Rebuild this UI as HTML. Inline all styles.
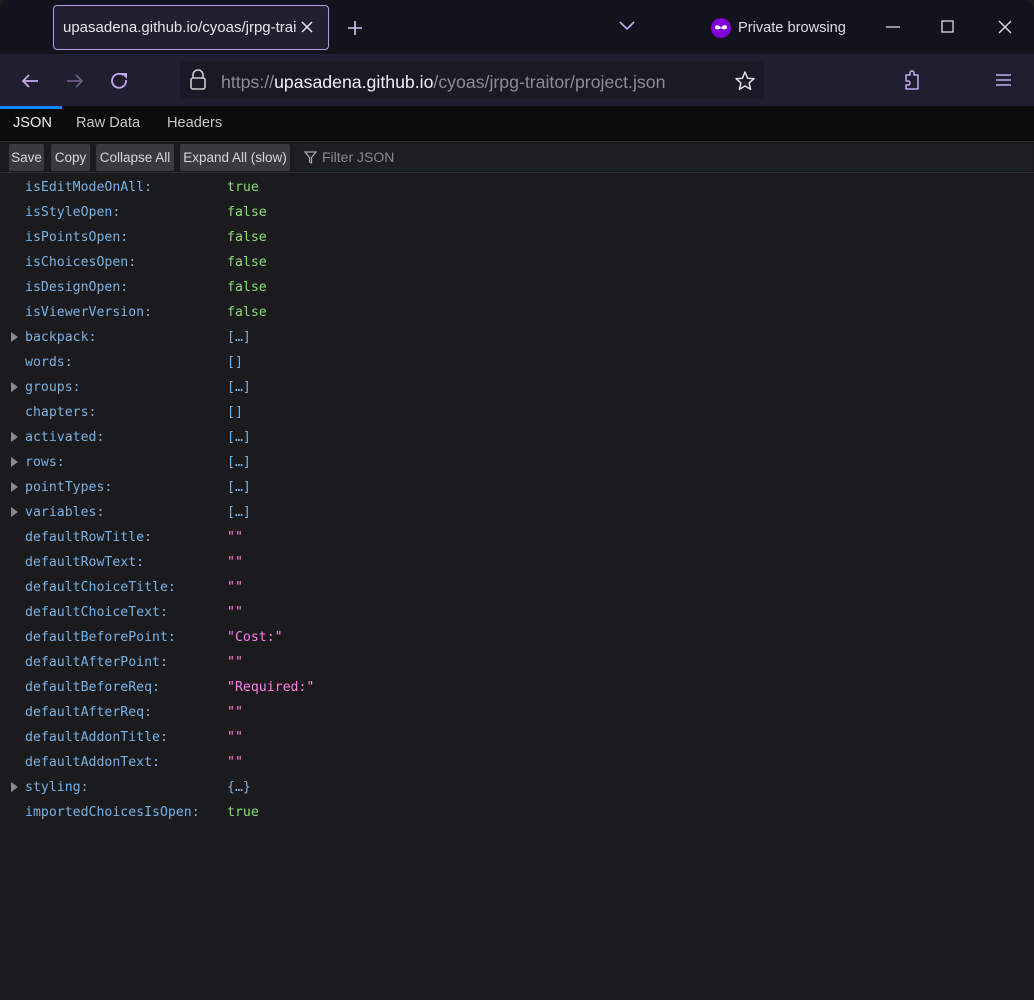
<!DOCTYPE html>
<html><head><meta charset="utf-8"><style>
*{margin:0;padding:0;box-sizing:border-box}
body{width:1034px;height:1000px;background:#1b1b1e;font-family:"Liberation Sans",sans-serif;position:relative;overflow:hidden}
.abs{position:absolute}
.tabbar{left:0;top:0;width:1034px;height:54px;background:#13131d;border-radius:10px 10px 0 0}
.tab{left:53px;top:5px;width:276px;height:45px;border:1px solid #b99ae4;border-radius:4px;background:#20202e;color:#e6e6ee;font-size:15px;line-height:43px;padding-left:9px;white-space:nowrap;overflow:hidden}
.nav{left:0;top:54px;width:1034px;height:52px;background:#201f30}
.url{left:180px;top:61px;width:584px;height:38px;background:#1a1a27;border-radius:5px}
.ctabs{left:0;top:106px;width:1034px;height:35px;background:#0c0c0d}
.tb{left:0;top:141px;width:1034px;height:32px;background:#1b1b1e;border-top:1px solid #2e2e31;border-bottom:1px solid #2e2e31}
.btn{top:144px;height:27px;background:#3a3a3e;border-radius:2px;color:#d7d7db;font-size:13.5px;line-height:27px;text-align:center;white-space:nowrap}
.filter{left:293px;top:144px;width:740px;height:27px;background:#1c2022;color:#8a8a90;font-size:14px;line-height:27px;padding-left:29px}
.row{position:absolute;left:25px;font-family:"DejaVu Sans Mono","Liberation Mono",monospace;font-size:13.2px;height:25px;line-height:25px;color:#75b2e8;white-space:pre;margin-top:1px}
.v{position:absolute;left:202px}
.t{color:#86de74}.s{color:#ff7de9}.b{color:#75b2e8}
.arr{position:absolute;left:-14px;top:7px;width:0;height:0;border-left:7px solid #8a8a8e;border-top:5px solid transparent;border-bottom:5px solid transparent}
</style></head><body>
<div class="abs tabbar"></div>
<div class="abs tab">upasadena.github.io/cyoas/jrpg-trai</div>
<svg class="abs" style="left:300px;top:20px" width="14" height="14"><path d="M2 2L12 12M12 2L2 12" stroke="#e6e6ee" stroke-width="1.5"/></svg>
<svg class="abs" style="left:346px;top:19px" width="18" height="18"><path d="M9 2V16M2 9H16" stroke="#d9c3f7" stroke-width="1.6"/></svg>
<svg class="abs" style="left:618px;top:20px" width="18" height="12"><path d="M2 2L9 9L16 2" stroke="#c8a9f0" stroke-width="1.6" fill="none"/></svg>
<svg class="abs" style="left:711px;top:18px" width="20" height="20"><circle cx="10" cy="10" r="10" fill="#8000d7"/><path d="M4 9c0-3 5-2 6 1c1-3 6-4 6-1c0 3-4 3-6 1c-2 2-6 2-6-1z" fill="#fff"/></svg>
<div class="abs" style="left:738px;top:18px;color:#dcdce6;font-size:14.6px;line-height:20px">Private browsing</div>
<svg class="abs" style="left:884px;top:20px" width="18" height="14"><path d="M2 7H16" stroke="#ddd" stroke-width="1.3"/></svg>
<svg class="abs" style="left:941px;top:20px" width="14" height="14"><rect x="1" y="1" width="11" height="11" stroke="#ddd" stroke-width="1.3" fill="none"/></svg>
<svg class="abs" style="left:997px;top:19px" width="16" height="16"><path d="M2 2L14 14M14 2L2 14" stroke="#ddd" stroke-width="1.4"/></svg>
<div class="abs nav"></div>
<svg class="abs" style="left:20px;top:71px" width="20" height="20"><path d="M18 10H3M9 4L3 10L9 16" stroke="#c8a9f0" stroke-width="1.7" fill="none"/></svg>
<svg class="abs" style="left:65px;top:71px" width="20" height="20"><path d="M2 10H17M11 4L17 10L11 16" stroke="#6d5a86" stroke-width="1.7" fill="none"/></svg>
<svg class="abs" style="left:110px;top:71px" width="20" height="20"><path d="M16 9A7 7 0 1 1 13 4" stroke="#c8a9f0" stroke-width="1.8" fill="none"/><path d="M11 2H17V8Z" fill="#c8a9f0"/></svg>
<div class="abs url"></div>
<svg class="abs" style="left:188px;top:69px" width="20" height="22"><path d="M5 9V6a5 5 0 0 1 10 0V9" stroke="#ccc" stroke-width="1.6" fill="none"/><rect x="3" y="9" width="14" height="11" rx="2" stroke="#ccc" stroke-width="1.6" fill="none"/></svg>
<div class="abs" style="left:221px;top:71px;font-size:17.7px;line-height:22px;color:#8d8b98;white-space:nowrap">https://<span style="color:#f0f0f4">upasadena.github.io</span>/cyoas/jrpg-traitor/project.json</div>
<svg class="abs" style="left:734px;top:70px" width="22" height="22"><path d="M11 2L13.6 8.2L20 8.7L15.1 12.9L16.6 19.3L11 15.9L5.4 19.3L6.9 12.9L2 8.7L8.4 8.2Z" stroke="#e0e0ea" stroke-width="1.5" fill="none" stroke-linejoin="round"/></svg>
<svg class="abs" style="left:904px;top:70px" width="20" height="22"><path d="M2 9V5H6V3a2 2 0 0 1 4 0V5H14V19H2V15H4a2 2 0 0 0 0-4H2Z" stroke="#c8a9f0" stroke-width="1.5" fill="none" stroke-linejoin="round"/></svg>
<svg class="abs" style="left:995px;top:72px" width="18" height="16"><path d="M1 3H16M1 8H16M1 13H16" stroke="#c8a9f0" stroke-width="1.6"/></svg>
<div class="abs ctabs"></div>
<div class="abs" style="left:0;top:106px;width:62px;height:3px;background:#0a84ff"></div>
<div class="abs" style="left:13px;top:115px;color:#f0f0f4;font-size:14.6px">JSON</div>
<div class="abs" style="left:76px;top:115px;color:#c8c8cc;font-size:14.6px">Raw Data</div>
<div class="abs" style="left:167px;top:115px;color:#c8c8cc;font-size:14.6px">Headers</div>
<div class="abs tb"></div>
<div class="abs btn" style="left:9px;width:35px">Save</div>
<div class="abs btn" style="left:51px;width:39px">Copy</div>
<div class="abs btn" style="left:96px;width:78px">Collapse All</div>
<div class="abs btn" style="left:180px;width:110px">Expand All (slow)</div>
<div class="abs filter">Filter JSON</div>
<svg class="abs" style="left:304px;top:151px" width="13" height="14"><path d="M1 1H12L7.5 6.5V12L5.5 11V6.5Z" stroke="#aaa" stroke-width="1.2" fill="none"/></svg>
<div class="row" style="top:174px">isEditModeOnAll:<span class="v t">true</span></div>
<div class="row" style="top:199px">isStyleOpen:<span class="v t">false</span></div>
<div class="row" style="top:224px">isPointsOpen:<span class="v t">false</span></div>
<div class="row" style="top:249px">isChoicesOpen:<span class="v t">false</span></div>
<div class="row" style="top:274px">isDesignOpen:<span class="v t">false</span></div>
<div class="row" style="top:299px">isViewerVersion:<span class="v t">false</span></div>
<div class="row" style="top:324px"><i class="arr"></i>backpack:<span class="v b">[…]</span></div>
<div class="row" style="top:349px">words:<span class="v b">[]</span></div>
<div class="row" style="top:374px"><i class="arr"></i>groups:<span class="v b">[…]</span></div>
<div class="row" style="top:399px">chapters:<span class="v b">[]</span></div>
<div class="row" style="top:424px"><i class="arr"></i>activated:<span class="v b">[…]</span></div>
<div class="row" style="top:449px"><i class="arr"></i>rows:<span class="v b">[…]</span></div>
<div class="row" style="top:474px"><i class="arr"></i>pointTypes:<span class="v b">[…]</span></div>
<div class="row" style="top:499px"><i class="arr"></i>variables:<span class="v b">[…]</span></div>
<div class="row" style="top:524px">defaultRowTitle:<span class="v s">""</span></div>
<div class="row" style="top:549px">defaultRowText:<span class="v s">""</span></div>
<div class="row" style="top:574px">defaultChoiceTitle:<span class="v s">""</span></div>
<div class="row" style="top:599px">defaultChoiceText:<span class="v s">""</span></div>
<div class="row" style="top:624px">defaultBeforePoint:<span class="v s">"Cost:"</span></div>
<div class="row" style="top:649px">defaultAfterPoint:<span class="v s">""</span></div>
<div class="row" style="top:674px">defaultBeforeReq:<span class="v s">"Required:"</span></div>
<div class="row" style="top:699px">defaultAfterReq:<span class="v s">""</span></div>
<div class="row" style="top:724px">defaultAddonTitle:<span class="v s">""</span></div>
<div class="row" style="top:749px">defaultAddonText:<span class="v s">""</span></div>
<div class="row" style="top:774px"><i class="arr"></i>styling:<span class="v b">{…}</span></div>
<div class="row" style="top:799px">importedChoicesIsOpen:<span class="v t">true</span></div>
</body></html>
